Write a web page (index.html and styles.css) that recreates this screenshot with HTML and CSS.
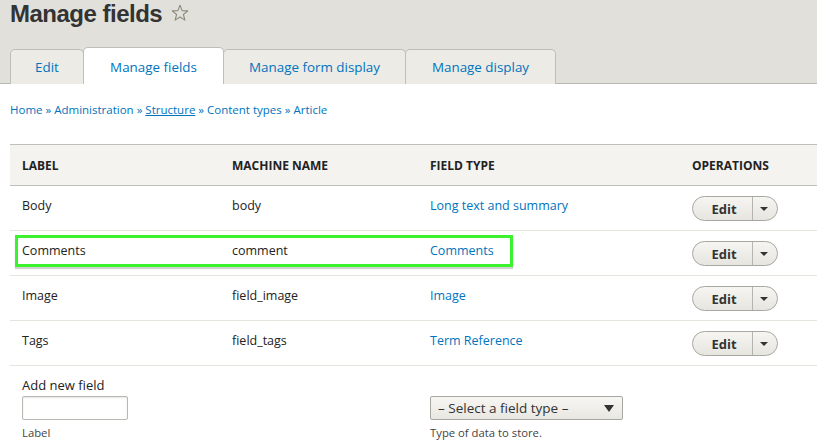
FILE: index.html
```html
<!DOCTYPE html>
<html>
<head>
<meta charset="utf-8">
<link rel="stylesheet" href="styles.css">
</head>
<body>
<header class="page-head">
  <h1 class="title">Manage fields <svg class="star" width="18" height="18" viewBox="0 0 18 18"><path d="M9 1.3 L11.1 6.6 L16.8 6.9 L12.4 10.5 L13.9 16.1 L9 13 L4.1 16.1 L5.6 10.5 L1.2 6.9 L6.9 6.6 Z" fill="none" stroke="#8a8a7e" stroke-width="1.1" stroke-linejoin="round"/></svg></h1>
  <ul class="tabs">
    <li class="tab tab-edit"><a href="#">Edit</a></li>
    <li class="tab tab-fields active"><a href="#">Manage fields</a></li>
    <li class="tab tab-form"><a href="#">Manage form display</a></li>
    <li class="tab tab-display"><a href="#">Manage display</a></li>
  </ul>
</header>
<main class="content">
  <nav class="breadcrumb"><a href="#">Home</a> » <a href="#">Administration</a> » <a href="#" class="u">Structure</a> » <a href="#">Content types</a> » <a href="#">Article</a></nav>
  <table class="fields">
    <thead>
      <tr><th class="c1">Label</th><th class="c2">Machine name</th><th class="c3">Field type</th><th class="c4">Operations</th></tr>
    </thead>
    <tbody>
      <tr><td>Body</td><td>body</td><td><a href="#">Long text and summary</a></td><td><span class="dropbutton"><span class="db-main">Edit</span><span class="db-toggle"><span class="caret"></span></span></span></td></tr>
      <tr><td class="hl-cell">Comments<span class="highlight"></span></td><td>comment</td><td><a href="#">Comments</a></td><td><span class="dropbutton"><span class="db-main">Edit</span><span class="db-toggle"><span class="caret"></span></span></span></td></tr>
      <tr><td>Image</td><td>field_image</td><td><a href="#">Image</a></td><td><span class="dropbutton"><span class="db-main">Edit</span><span class="db-toggle"><span class="caret"></span></span></span></td></tr>
      <tr><td>Tags</td><td>field_tags</td><td><a href="#">Term Reference</a></td><td><span class="dropbutton"><span class="db-main">Edit</span><span class="db-toggle"><span class="caret"></span></span></span></td></tr>
      <tr class="add-row">
        <td><div class="add-label">Add new field</div><div class="text-input"></div><div class="desc">Label</div></td>
        <td></td>
        <td><div class="select"><span>– Select a field type –</span><span class="sel-arrow"></span></div><div class="desc">Type of data to store.</div></td>
        <td></td>
      </tr>
    </tbody>
  </table>
</main>
</body>
</html>
```
FILE: styles.css
```css
* { box-sizing: border-box; }
html, body { margin: 0; padding: 0; background: #fff; }
body {
  font-family: "Open Sans", "Noto Sans", sans-serif;
  color: #333;
  font-size: 13px;
  overflow: hidden;
  width: 817px;
  height: 443px;
}
a { color: #0074bd; text-decoration: none; }
.page-head {
  background: #e1e0db;
  border-bottom: 1px solid #b8b8b3;
  height: 84px;
  padding-left: 10px;
}
.title {
  margin: 0;
  font-family: "Liberation Sans", Arial, sans-serif;
  font-size: 24px;
  line-height: 28px;
  font-weight: 700;
  color: #333;
  display: flex;
  align-items: center;
  gap: 9px;
  height: 28px;
  letter-spacing: -0.5px;
}
.star { margin-top: -2px; }
.tabs {
  list-style: none;
  margin: 19px 0 0 0;
  padding: 0;
  display: flex;
  align-items: flex-end;
  height: 36px;
}
.tab {
  height: 35px;
  border: 1px solid #bfbfba;
  border-bottom: none;
  border-radius: 5px 5px 0 0;
  background: #ecebe6;
  display: flex;
  align-items: center;
  justify-content: center;
  padding-bottom: 0;
  margin-bottom: -1px;
  margin-right: -1px;
  font-size: 13.4px;
}
.tab a { color: #0074bd; }
.tab.active { background: #fff; height: 37px; padding-top: 1px; position: relative; z-index: 1; }
.tab-edit { width: 74px; }
.tab-fields { width: 141px; }
.tab-form { width: 183px; }
.tab-display { width: 151px; }
.content { padding: 0 0 0 10px; }
.breadcrumb {
  font-size: 11.5px;
  height: 60px;
  padding-top: 18px;
  color: #0074bd;
}
.breadcrumb .u { text-decoration: underline; }
.fields {
  border-collapse: collapse;
  width: 830px;
  table-layout: fixed;
}
.fields th {
  background: #f4f3ef;
  border-top: 1px solid #bfbfba;
  border-bottom: 1px solid #bfbfba;
  text-align: left;
  text-transform: uppercase;
  font-size: 12px;
  font-weight: 700;
  color: #222;
  height: 41px;
  padding: 0 12px;
}
.c1 { width: 210px; }
.c2 { width: 198px; }
.c3 { width: 262px; }
.fields td {
  height: 45px;
  border-bottom: 1px solid #e6e4df;
  padding: 11px 12px 0 12px;
  vertical-align: top;
  line-height: 18px;
  font-size: 12.5px;
  color: #222;
}
.hl-cell { position: relative; }
.highlight {
  position: absolute;
  left: 5px;
  top: 4px;
  width: 498px;
  height: 32px;
  border: 3px solid #3cf22e;
  box-shadow: 0 2px 1px rgba(0,0,0,0.18);
}
.dropbutton {
  display: inline-flex;
  height: 25px;
  border: 1px solid #a8a8a3;
  border-radius: 13px;
  background: linear-gradient(#f6f5f1, #e6e5e0);
  margin-top: -1px;
  vertical-align: top;
}
.db-main {
  width: 60px;
  display: flex;
  align-items: center;
  justify-content: center;
  font-weight: 700;
  font-size: 13px;
  color: #333;
  border-right: 1px solid #b5b5b0;
  padding-left: 3px;
}
.db-toggle {
  width: 24px;
  display: flex;
  align-items: center;
  justify-content: center;
}
.caret {
  width: 0; height: 0;
  border-left: 4px solid transparent;
  border-right: 4px solid transparent;
  border-top: 4px solid #333;
  margin-right: 2px;
}
.add-row td { border-bottom: none; height: 80px; padding-top: 11px; }
.add-label { font-size: 13px; color: #222; line-height: 16px; }
.text-input {
  width: 106px;
  height: 24px;
  border: 1px solid #b8b8b3;
  border-radius: 2px;
  box-shadow: inset 0 1px 2px rgba(0,0,0,0.1);
  margin-top: 3px;
  background: #fff;
}
.desc { font-size: 11.3px; line-height: 14px; color: #444; margin-top: 6px; }
.select {
  margin-top: 19px;
  width: 193px;
  height: 24px;
  border: 1px solid #a8a8a3;
  border-radius: 2px;
  background: linear-gradient(#f7f6f2, #e8e7e2);
  display: flex;
  align-items: center;
  justify-content: space-between;
  padding: 0 8px 0 7px;
  font-size: 13.5px;
  color: #333;
}
.sel-arrow {
  width: 0; height: 0;
  border-left: 5px solid transparent;
  border-right: 5px solid transparent;
  border-top: 7px solid #333;
}
```
